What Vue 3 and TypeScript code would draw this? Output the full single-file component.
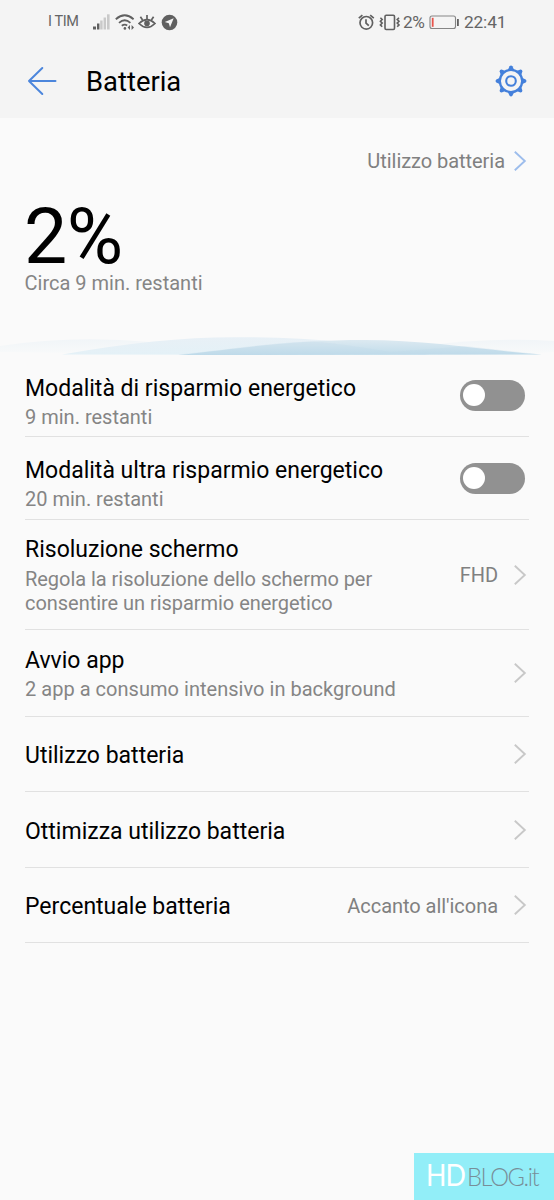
<script setup lang="ts">
interface Row {
  id: string
  title: string
  sub?: string
  value?: string
  toggle?: boolean
}

const rows: Row[] = [
  { id: 'saver', title: 'Modalità di risparmio energetico', sub: '9 min. restanti', toggle: true },
  { id: 'ultra', title: 'Modalità ultra risparmio energetico', sub: '20 min. restanti', toggle: true },
  { id: 'resolution', title: 'Risoluzione schermo', sub: 'Regola la risoluzione dello schermo per consentire un risparmio energetico', value: 'FHD' },
  { id: 'launch', title: 'Avvio app', sub: '2 app a consumo intensivo in background' },
  { id: 'usage', title: 'Utilizzo batteria' },
  { id: 'optimize', title: 'Ottimizza utilizzo batteria' },
  { id: 'percent', title: 'Percentuale batteria', value: "Accanto all'icona" },
]
const teeth = [0, 45, 90, 135, 180, 225, 270, 315]
</script>

<template>
  <div class="screen">
    <header class="top">
      <div class="status">
        <span class="carrier">I TIM</span>
        <svg class="signal" width="18" height="16" viewBox="0 0 18 16">
          <g fill="#606060"><rect x="0" y="12.5" width="3" height="3" /><rect x="4" y="9.5" width="2.4" height="6" /></g>
          <g fill="#c9c9c9"><rect x="7.2" y="6.5" width="2.4" height="9" /><rect x="10.6" y="3.5" width="2.4" height="12" /><rect x="14" y="0.3" width="2.6" height="15.2" /></g>
        </svg>
        <svg class="wifi" width="21" height="17" viewBox="0 0 21 17" fill="none" stroke="#606060" stroke-width="1.8">
          <path d="M.8 5.2Q9.7-2.6 18.6 5.2" /><path d="M4 8.8Q9.7 3.6 15.4 8.8" /><path d="M6.8 11.8Q9.5 9.6 12.2 11.4" />
          <circle cx="9.9" cy="14.4" r="1.3" fill="#606060" stroke="none" />
          <path d="M15 10.9l-2.4 2.5 2.4 2.5zM16.6 10.9l2.4 2.5-2.4 2.5z" fill="#606060" stroke="none" />
        </svg>
        <svg class="eye" width="18" height="17" viewBox="0 0 18 17" fill="none" stroke="#606060" stroke-width="1.7">
          <path d="M1 9.5Q9 1.7 17 9.5Q9 17.3 1 9.5Z" /><circle cx="9" cy="9.4" r="2.8" fill="#606060" stroke="none" />
          <path d="M9 5V1M4.6 6L2.4 2.8M13.4 6l2.2-3.2" />
        </svg>
        <svg class="nav" width="17" height="17" viewBox="0 0 17 17">
          <circle cx="8.5" cy="8.5" r="7.8" fill="#606060" /><path d="M12.7 4.3L3.8 8.1 7.8 9.3 9 13.2Z" fill="#f4f4f4" />
        </svg>
        <span class="gap"></span>
        <svg class="alarm" width="17" height="17" viewBox="0 0 17 17" fill="none" stroke="#606060" stroke-width="1.7">
          <circle cx="8.3" cy="8.8" r="6.3" /><path d="M8 5.2v3.9l2.8 2.6M.8 4.2L4.4 1.2M12.2 1.2l3.6 3" />
        </svg>
        <svg class="vibrate" width="22" height="17" viewBox="0 0 22 17" fill="none" stroke="#606060" stroke-width="1.6">
          <rect x="6" y="1.3" width="9.5" height="14.2" rx="1.2" />
          <path d="M1.4 3.7l1.8 1.8-1.8 1.8 1.8 1.8-1.8 1.8 1.8 1.8M20 3.7l-1.8 1.8 1.8 1.8-1.8 1.8 1.8 1.8-1.8 1.8" />
        </svg>
        <span class="pct">2%</span>
        <svg class="battery" width="31" height="15" viewBox="0 0 31 15">
          <rect x="1" y="1" width="25.5" height="12.5" rx="2" fill="none" stroke="#858585" stroke-width="1.1" />
          <rect x="2.8" y="2.8" width="1.8" height="9" fill="#e8554c" /><rect x="28" y="4" width="1.8" height="7" fill="#606060" />
        </svg>
        <span class="clock">22:41</span>
      </div>
      <div class="bar">
        <svg class="back" width="30" height="30" viewBox="0 0 30 30" fill="none" stroke="#4c86dc" stroke-width="2" stroke-linecap="round" stroke-linejoin="round">
          <path d="M15.3 2L2 15l13.3 13M2 15h26.5" />
        </svg>
        <h1>Batteria</h1>
        <svg class="gear" width="32" height="32" viewBox="0 0 32 32" fill="none" stroke="#4480db">
          <circle cx="16" cy="16" r="11.2" stroke-width="2.3" /><circle cx="16" cy="16" r="4.8" stroke-width="2.1" />
          <path v-for="a in teeth" :key="a" d="M12.8 5L14.6 1.3Q16 -.2 17.4 1.3L19.2 5Z" fill="#4480db" stroke="none" :transform="`rotate(${a} 16 16)`" />
        </svg>
      </div>
    </header>

    <section class="hero">
      <div class="link">
        <span>Utilizzo batteria</span>
        <svg class="chev" width="14" height="22" viewBox="0 0 14 22" fill="none" stroke="#9dbdec" stroke-width="1.9"><path d="M1.8 1.8L11.8 11 1.8 20.2" /></svg>
      </div>
      <div class="level">2%</div>
      <div class="remain">Circa 9 min. restanti</div>
      <svg class="waves" width="554" height="20" viewBox="0 0 554 20">
        <defs>
          <linearGradient id="w1" x1="0" y1="0" x2="0" y2="1"><stop offset="0" stop-color="#f1f5f8" /><stop offset="1" stop-color="#f9fafa" /></linearGradient>
          <linearGradient id="w2" x1="0" y1="0" x2="0" y2="1"><stop offset="0" stop-color="#e8f0f6" /><stop offset="1" stop-color="#e4f1f7" /></linearGradient>
          <linearGradient id="w3" x1="0" y1="0" x2="0" y2="1"><stop offset="0" stop-color="#dce9f1" /><stop offset="1" stop-color="#c0dcea" /></linearGradient>
        </defs>
        <path d="M0 11Q72 0 150 7Q190 12 240 20L0 17Z" fill="url(#w1)" />
        <path d="M430 10Q495 2 554 6V17L510 20H400Z" fill="url(#w1)" />
        <path d="M62 19.5Q160 2 235 2.2Q340 2 430 20Z" fill="url(#w2)" />
        <path d="M178 20C250 12 295 5 365 5C430 5 490 16 542 19.5Z" fill="url(#w3)" />
        <path d="M178 19.7C250 12 280 7 312 6.5Q345 9 390 17Q420 15 465 11L542 19.5Z" fill="#b9d8e9" opacity=".22" />
      </svg>
    </section>

    <main class="list">
      <div v-for="row in rows" :key="row.id" class="row" :class="row.id">
        <div class="copy">
          <div class="title">{{ row.title }}</div>
          <div v-if="row.sub" class="sub">{{ row.sub }}</div>
        </div>
        <span v-if="row.toggle" class="toggle"><i></i></span>
        <template v-else>
          <span v-if="row.value" class="value">{{ row.value }}</span>
          <svg class="chev" width="14" height="22" viewBox="0 0 14 22" fill="none" stroke="#c8c8c8" stroke-width="1.9"><path d="M1.8 1.8L11.8 11 1.8 20.2" /></svg>
        </template>
      </div>
    </main>

    <footer class="brand"><span class="hd">HD</span><span class="blog">BLOG.it</span></footer>
  </div>
</template>

<style>
body { margin: 0; background: #fafafa; }
</style>

<style scoped>
.screen { width: 554px; height: 1200px; display: flex; flex-direction: column; box-sizing: border-box; overflow: hidden; background: #fafafa; font-family: Roboto, sans-serif; color: #000; }
svg { display: block; flex: none; }
.top { height: 118px; flex: none; background: #f4f4f4; }
.status { height: 44px; padding: 0 47px 0 48px; display: flex; align-items: center; color: #656565; white-space: nowrap; }
.carrier { width: 45px; font-size: 14.5px; line-height: 20px; letter-spacing: -0.4px; }
.wifi { margin-left: 4px; }
.eye { margin-left: 2px; }
.nav { margin-left: 5px; }
.gap { flex: 1; }
.vibrate { margin-left: 4px; }
.pct { width: 26px; font-size: 17.2px; margin-left: 2px; letter-spacing: -0.3px; }
.battery { margin-right: 4px; }
.clock { width: 43px; font-size: 17.3px; letter-spacing: -0.15px; }
.bar { height: 74px; padding: 0 27px; display: flex; align-items: center; }
.back { margin-bottom: 1px; }
h1 { flex: 1; margin: 1px 0 0 29px; font-size: 27.4px; line-height: 32px; font-weight: 400; }
.gear { margin-bottom: 1px; }
.hero { height: 237px; flex: none; display: flex; flex-direction: column; }
.link { height: 24px; margin: 31px 27px 0 0; display: flex; justify-content: flex-end; align-items: center; gap: 8px; color: #808080; font-size: 20px; }
.link span { letter-spacing: -0.05px; }
.level { height: 68px; margin: 30px 0 0 24px; font-size: 77px; line-height: 68px; letter-spacing: -0.6px; }
.remain { height: 24px; margin: 0 0 0 24.5px; font-size: 20px; line-height: 24px; color: #858585; }
.waves { margin-top: auto; }
.list { display: flex; flex-direction: column; margin: 0 25px; }
.row { box-sizing: border-box; display: flex; align-items: center; border-bottom: 1px solid #e1e1e1; padding-right: 2px; }
.copy { flex: 1; }
.title { font-size: 23px; line-height: 28px; white-space: nowrap; }
.sub { font-size: 20px; line-height: 24px; color: #858585; margin-top: 3px; }
.saver { height: 82px; padding-right: 4px; }
.ultra { height: 83px; padding-right: 4px; }
.saver .copy, .ultra .copy { padding-top: 12px; }
.saver .sub, .ultra .sub { margin-top: 2px; }
.resolution { height: 110px; }
.resolution .copy { padding-top: 2px; }
.resolution .sub { width: 360px; margin-top: 3px; letter-spacing: -0.04px; }
.launch { height: 87px; }
.launch .copy { padding-top: 2px; }
.launch .sub { margin-top: 2px; letter-spacing: 0.03px; }
.usage, .percent { height: 75px; }
.optimize { height: 76px; }
.usage .copy, .optimize .copy, .percent .copy { padding-top: 4px; }
.percent .value { padding-top: 2px; }
.toggle { width: 65px; height: 31px; box-sizing: border-box; padding: 4px 3px; border-radius: 16px; background: #919191; }
.toggle i { display: block; width: 22px; height: 22px; border-radius: 50%; background: #fff; }
.value { font-size: 20px; line-height: 24px; color: #808080; margin-right: 15px; letter-spacing: -0.04px; }
.brand { width: 140px; height: 47px; flex: none; box-sizing: border-box; margin: auto 0 0 auto; padding-left: 12px; display: flex; align-items: baseline; background: #92eef8; white-space: nowrap; line-height: 43px; }
.brand span { display: block; flex: none; transform-origin: left; }
.hd { width: 41px; color: #fff; font-family: Lato, sans-serif; font-size: 30.5px; letter-spacing: -1px; transform: scaleX(.88); }
.blog { color: #788e98; font-family: Lato, sans-serif; font-weight: 300; font-size: 25.5px; letter-spacing: -1.5px; transform: scaleX(.93); }
</style>
